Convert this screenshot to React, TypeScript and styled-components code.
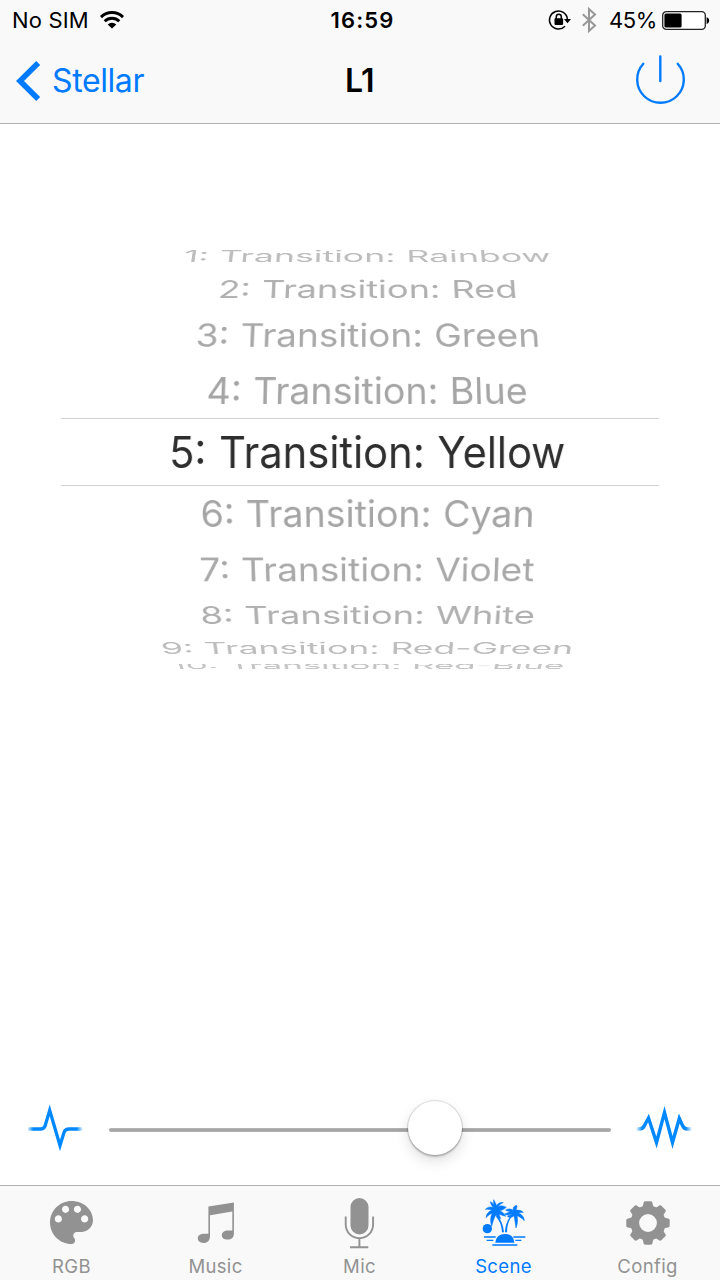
import React from "react";
import styled, { createGlobalStyle } from "styled-components";

const BLUE = "#007aff";
const GREY = "#929292";

const GlobalStyle = createGlobalStyle`
  * { box-sizing: border-box; }
  body { margin: 0; background: #fff; }
  svg { display: block; flex: none; overflow: visible; }
`;

const Screen = styled.div`
  width: 720px;
  height: 1280px;
  display: flex;
  flex-direction: column;
  overflow: hidden;
  background: #fff;
  font-family: Inter, "Liberation Sans", sans-serif;
  color: #000;
`;

const Header = styled.header`
  height: 124px;
  flex: none;
  background: #f9f9f9;
  border-bottom: 1px solid #b2b2b2;
`;

const StatusBar = styled.div`
  height: 40px;
  padding: 0 10px 0 12px;
  display: grid;
  grid-template-columns: 1fr auto 1fr;
  align-items: center;
  font-size: 22px;
  line-height: 40px;
`;

const StatusGroup = styled.div<{ $end?: boolean }>`
  display: flex;
  align-items: center;
  justify-content: ${(p) => (p.$end ? "flex-end" : "flex-start")};
`;

const Carrier = styled.span`
  margin-right: 11px;
  letter-spacing: 0.15px;
`;

const Clock = styled.span`
  margin-left: 3px;
  font-weight: 600;
  letter-spacing: 1.1px;
`;

const BluetoothSlot = styled.span`
  margin-left: 11px;
`;

const Percent = styled.span`
  margin: 0 5px 0 13px;
  letter-spacing: -0.4px;
`;

const NavBar = styled.div`
  height: 81px;
  padding: 0 35px 0 15px;
  display: grid;
  grid-template-columns: 1fr auto 1fr;
  align-items: center;
`;

const BackButton = styled.button`
  display: flex;
  align-items: center;
  gap: 12px;
  padding: 0;
  border: 0;
  background: none;
  color: ${BLUE};
  font: 400 32px/40px Inter, sans-serif;
  letter-spacing: -0.4px;
`;

const Title = styled.h1`
  margin: 0 0 0 19px;
  font-size: 32px;
  line-height: 40px;
  font-weight: 600;
  letter-spacing: -0.5px;
`;

const PowerButton = styled.button`
  justify-self: end;
  padding: 0 0 2px;
  border: 0;
  background: none;
`;

const Content = styled.main`
  flex: 1;
  display: flex;
  flex-direction: column;
  justify-content: space-between;
`;

const Wheel = styled.div`
  margin: 118px 61px 0;
  display: flex;
  flex-direction: column;
`;

const WheelRow = styled.div<{ $height: number; $selected?: boolean; $clip?: boolean }>`
  height: ${(p) => p.$height}px;
  padding-left: 15px;
  display: flex;
  align-items: center;
  justify-content: center;
  overflow: ${(p) => (p.$clip ? "hidden" : "visible")};
  border: solid #d0d0d0;
  border-width: ${(p) => (p.$selected ? "1px 0" : "0")};
`;

const WheelText = styled.span<{ $tilt: number; $stretch: number; $shift: number; $color: string }>`
  flex: none;
  font-size: 44px;
  line-height: 54px;
  word-spacing: 1px;
  white-space: nowrap;
  color: ${(p) => p.$color};
  transform: translateY(${(p) => p.$shift}px) perspective(2800px) rotateX(${(p) => p.$tilt}deg)
    scaleX(${(p) => p.$stretch});
`;

const SpeedBar = styled.div`
  height: 54px;
  margin: 0 28px 30px 27px;
  display: flex;
  align-items: center;
  justify-content: space-between;
`;

const Track = styled.div`
  position: relative;
  width: 502px;
  height: 4px;
  margin-top: 4px;
  border-radius: 2px;
  background: linear-gradient(#b8b8b8, #a0a0a0 50%, #b5b5b5);
`;

const Thumb = styled.div`
  position: absolute;
  left: 299px;
  top: -27px;
  width: 54px;
  height: 54px;
  border-radius: 50%;
  background: #fff;
  box-shadow: 0 0 1px 1px rgba(0, 0, 0, 0.13), 0 2px 2px rgba(0, 0, 0, 0.2), 0 6px 14px rgba(0, 0, 0, 0.13);
`;

const TabBar = styled.nav`
  height: 95px;
  flex: none;
  display: grid;
  grid-template-columns: repeat(5, 1fr);
  background: #f9f9f9;
  border-top: 1px solid #b2b2b2;
`;

const Tab = styled.div<{ $active?: boolean }>`
  padding-right: 1px;
  display: flex;
  flex-direction: column;
  align-items: center;
  color: ${(p) => (p.$active ? BLUE : GREY)};
  font-size: 18.5px;
  line-height: 23px;
  letter-spacing: 0.35px;
`;

const TabIcon = styled.div`
  height: 69px;
  padding-top: 4px;
  display: flex;
  align-items: center;
`;

const WifiIcon = () => (
  <svg width="24" height="18" viewBox="0 0 24 18" fill="none" stroke="#000" strokeWidth="2.9">
    <path d="M1 6.100a15.600 15.600 0 0 1 22 0" />
    <path d="M4.700 10.200a10.400 10.400 0 0 1 14.600 0" />
    <path d="M12 17.400 7.700 13.400a6.200 6.200 0 0 1 8.600 0z" fill="#000" stroke="none" />
  </svg>
);

const RotationLockIcon = () => (
  <svg width="22" height="20" viewBox="0 0 22 20">
    <path d="M18.400 9.200A9 9 0 1 0 16 16.200" fill="none" stroke="#000" strokeWidth="1.5" />
    <path d="M15 9h7l-3.500 4.300z" />
    <rect x="5.5" y="8.3" width="8.6" height="6.6" rx=".8" />
    <path d="M7.300 9V6.800a2.500 2.500 0 0 1 5 0V9" fill="none" stroke="#000" strokeWidth="1.5" />
  </svg>
);

const BluetoothIcon = () => (
  <svg width="14" height="24" viewBox="0 0 14 24" fill="none" stroke="#979797" strokeWidth="2">
    <path d="M.8 6.200 13 17.600 7 23V1l6 5.400L.8 17.800" />
  </svg>
);

const BatteryIcon = () => (
  <svg width="48" height="19" viewBox="0 0 48 19">
    <rect x=".7" y=".7" width="42.6" height="17.6" rx="3.6" fill="#fff" stroke="#222" strokeWidth="1.3" />
    <rect x="2.4" y="2.4" width="17.2" height="14.2" rx="1.6" />
    <path d="M44.600 6.200c3.400.7 3.400 6 0 6.700z" />
  </svg>
);

const BackIcon = () => (
  <svg width="25" height="40" viewBox="0 0 25 40" fill="none" stroke={BLUE} strokeWidth="5.6">
    <path d="M23.200 1.900 5 20l18.200 18.100" />
  </svg>
);

const PowerIcon = () => (
  <svg width="50" height="50" viewBox="0 0 50 50" fill="none" stroke={BLUE} strokeWidth="2.4" strokeLinecap="round">
    <path d="M8.300 8.800a23.300 23.300 0 1 0 34.400 0M25.300 1.500v24.500" />
  </svg>
);

const Fade = ({ id }: { id: string }) => (
  <linearGradient id={id} gradientUnits="userSpaceOnUse" x1="0" y1="0" x2="56" y2="0">
    <stop offset="0" stopColor="#0088ff" stopOpacity="0" />
    <stop offset=".11" stopColor="#0088ff" />
    <stop offset=".89" stopColor="#0088ff" />
    <stop offset="1" stopColor="#0088ff" stopOpacity="0" />
  </linearGradient>
);

const SlowIcon = () => (
  <svg width="56" height="54" viewBox="0 0 56 54" fill="none" strokeWidth="3.3" strokeMiterlimit="10">
    <Fade id="slow" />
    <path
      stroke="url(#slow)"
      d="M1 28H13.500Q17.200 28 18.200 24.500L22.700 9.300 33 44.500 37 31.500Q38.200 28 42 28H56"
    />
  </svg>
);

const FastIcon = () => (
  <svg width="56" height="54" viewBox="0 0 56 54" fill="none" strokeWidth="3.4" strokeMiterlimit="10">
    <Fade id="fast" />
    <path
      stroke="url(#fast)"
      d="M0 28H3Q7 28 8.500 24.500L12.500 17 20.500 41.500 28.500 11.500 36.500 41.500 43.300 17.500 46.500 24.500Q48 28 51.500 28H56"
    />
  </svg>
);

const PaletteIcon = () => (
  <svg width="43" height="43" viewBox="3 3 18 18" fill={GREY}>
    <path d="M12 3c-4.970 0-9 4.030-9 9s4.030 9 9 9c.830 0 1.500-.670 1.500-1.500 0-.390-.150-.740-.390-1.010-.230-.260-.380-.610-.380-.990 0-.830.670-1.500 1.500-1.500H16c2.760 0 5-2.240 5-5 0-4.420-4.030-8-9-8zm-5.500 9c-.830 0-1.500-.670-1.500-1.500S5.670 9 6.500 9 8 9.670 8 10.500 7.330 12 6.500 12zm3-4C8.670 8 8 7.330 8 6.500S8.670 5 9.500 5s1.500.670 1.500 1.500S10.330 8 9.500 8zm5 0c-.830 0-1.500-.670-1.500-1.500S13.670 5 14.500 5s1.500.670 1.500 1.500S15.330 8 14.500 8zm3 4c-.830 0-1.500-.670-1.500-1.500S16.670 9 17.500 9s1.500.670 1.500 1.500-.670 1.500-1.500 1.500z" />
  </svg>
);

const MusicIcon = () => (
  <svg width="38" height="42" viewBox="0 0 38 42" fill={GREY}>
    <path d="M11.400 4.500 36.900.5V31.500C36.900 35.500 34.500 37.500 30.500 37.500 27 37.500 24.800 35.900 24.800 33.200 24.800 30.200 27.500 28.500 31 28.500H35.300V9.500L13 13.200V34C13 38.500 10.500 41 6.500 41 3 41 .8 39 .8 36.300.8 33.300 3.500 31.700 7 31.700H11.400z" />
  </svg>
);

const MicIcon = () => (
  <svg width="31" height="52" viewBox="0 0 31 52">
    <rect x="6.5" y="1" width="18" height="36.5" rx="9" fill={GREY} />
    <path
      d="M1.700 19.500V27.500a13.700 13.700 0 0 0 27.400 0V19.500M15.400 41.500V50M6 50.300H24.300"
      fill="none"
      stroke={GREY}
      strokeWidth="1.9"
    />
  </svg>
);

const SceneIcon = () => (
  <svg width="44" height="48" viewBox="66 54 132 144" fill={BLUE}>
    <circle cx="82" cy="143" r="14" />
    <path d="M106 185C108 167 119 159 135 159S161 167 163 185z" />
    <path
      d="M72 168H107M160 168H196M80 178H100M166 178H184M97 192H172"
      stroke={BLUE}
      strokeWidth="4"
      fill="none"
    />
    <path d="M112 103C122 115 130 132 132 154H126C125 135 120 120 108 107zM158 104C147 115 141 133 141 154H135C135 134 142 115 155 102z" />
    <g stroke={BLUE} strokeWidth="1.5" strokeLinejoin="round">
      <path d="M107 82C104 72 99 65 91 62 92 70 97 77 103 81 96 76 85 76 76 85 84 84 91 85 97 88 87 90 79 98 78 110 85 103 91 99 97 97 91 107 90 122 95 136 99 122 102 110 108 101 110 106 115 111 122 113 121 108 118 103 117 99 124 102 131 105 137 106 134 98 127 92 119 89 126 88 133 85 139 79 131 74 122 73 114 77 118 71 125 66 130 65 121 62 112 68 110 74 108 68 104 61 101 56 99 65 102 75 107 82z" />
      <path d="M160 88C158 79 162 75 170 73 172 79 170 84 167 88 174 86 184 88 190 94 184 94 179 95 175 96 184 99 193 108 193 119 186 111 178 107 171 104 174 115 173 128 168 141 166 127 164 115 162 104 156 109 147 112 142 105 148 104 153 101 156 98 148 101 140 104 134 99 140 96 148 93 153 92 147 91 141 91 137 87 144 82 153 83 160 88z" />
    </g>
  </svg>
);

const GearIcon = () => (
  <svg width="44" height="44" viewBox="-22 -22 44 44">
    <circle r="13.2" fill="none" stroke={GREY} strokeWidth="8.6" />
    {[0, 45, 90, 135, 180, 225, 270, 315].map((a) => (
      <path
        key={a}
        transform={`rotate(${a})`}
        fill={GREY}
        d="M-6.400-15.300C-5-16.500-4.900-18-4.500-20-4.300-21.200-3.600-21.700-2.500-21.700H2.500C3.600-21.700 4.300-21.200 4.500-20 4.900-18 5-16.500 6.400-15.300z"
      />
    ))}
  </svg>
);

interface WheelItem {
  text: string;
  height: number;
  tilt: number;
  stretch: number;
  color: string;
  shift?: number;
  selected?: boolean;
  clip?: boolean;
}

const items: WheelItem[] = [
  { text: "1: Transition: Rainbow", height: 28, tilt: 68, stretch: 0.81, color: "#bdbdbd" },
  { text: "2: Transition: Red", height: 38, tilt: 56, stretch: 0.822, color: "#b0b0b0" },
  { text: "3: Transition: Green", height: 54, tilt: 43, stretch: 0.84, color: "#a9a9a9" },
  { text: "4: Transition: Blue", height: 56, tilt: 33, stretch: 0.853, color: "#a5a5a5", shift: 0.5 },
  { text: "5: Transition: Yellow", height: 68, tilt: 0, stretch: 0.947, color: "#2e2e2e", selected: true },
  { text: "6: Transition: Cyan", height: 54, tilt: -33, stretch: 0.854, color: "#a5a5a5", shift: 0.5 },
  { text: "7: Transition: Violet", height: 57, tilt: -42, stretch: 0.841, color: "#a9a9a9", shift: 0.5 },
  { text: "8: Transition: White", height: 35, tilt: -56, stretch: 0.83, color: "#b0b0b0" },
  { text: "9: Transition: Red-Green", height: 32, tilt: -68, stretch: 0.808, color: "#bdbdbd" },
  { text: "10: Transition: Red-Blue", height: 8, tilt: -77, stretch: 0.796, color: "#c4c4c4", shift: -2.5, clip: true },
];

const tabs = [
  { label: "RGB", icon: <PaletteIcon /> },
  { label: "Music", icon: <MusicIcon /> },
  { label: "Mic", icon: <MicIcon /> },
  { label: "Scene", icon: <SceneIcon />, active: true },
  { label: "Config", icon: <GearIcon /> },
];

export default function App() {
  return (
    <>
      <GlobalStyle />
      <Screen>
        <Header>
          <StatusBar>
            <StatusGroup>
              <Carrier>No SIM</Carrier>
              <WifiIcon />
            </StatusGroup>
            <Clock>16:59</Clock>
            <StatusGroup $end>
              <RotationLockIcon />
              <BluetoothSlot>
                <BluetoothIcon />
              </BluetoothSlot>
              <Percent>45%</Percent>
              <BatteryIcon />
            </StatusGroup>
          </StatusBar>
          <NavBar>
            <BackButton>
              <BackIcon />
              Stellar
            </BackButton>
            <Title>L1</Title>
            <PowerButton aria-label="Power">
              <PowerIcon />
            </PowerButton>
          </NavBar>
        </Header>
        <Content>
          <Wheel>
            {items.map((item) => (
              <WheelRow key={item.text} $height={item.height} $selected={item.selected} $clip={item.clip}>
                <WheelText
                  $tilt={item.tilt}
                  $stretch={item.stretch}
                  $shift={item.shift ?? 0}
                  $color={item.color}
                >
                  {item.text}
                </WheelText>
              </WheelRow>
            ))}
          </Wheel>
          <SpeedBar>
            <SlowIcon />
            <Track>
              <Thumb />
            </Track>
            <FastIcon />
          </SpeedBar>
        </Content>
        <TabBar>
          {tabs.map((tab) => (
            <Tab key={tab.label} $active={tab.active}>
              <TabIcon>{tab.icon}</TabIcon>
              {tab.label}
            </Tab>
          ))}
        </TabBar>
      </Screen>
    </>
  );
}
